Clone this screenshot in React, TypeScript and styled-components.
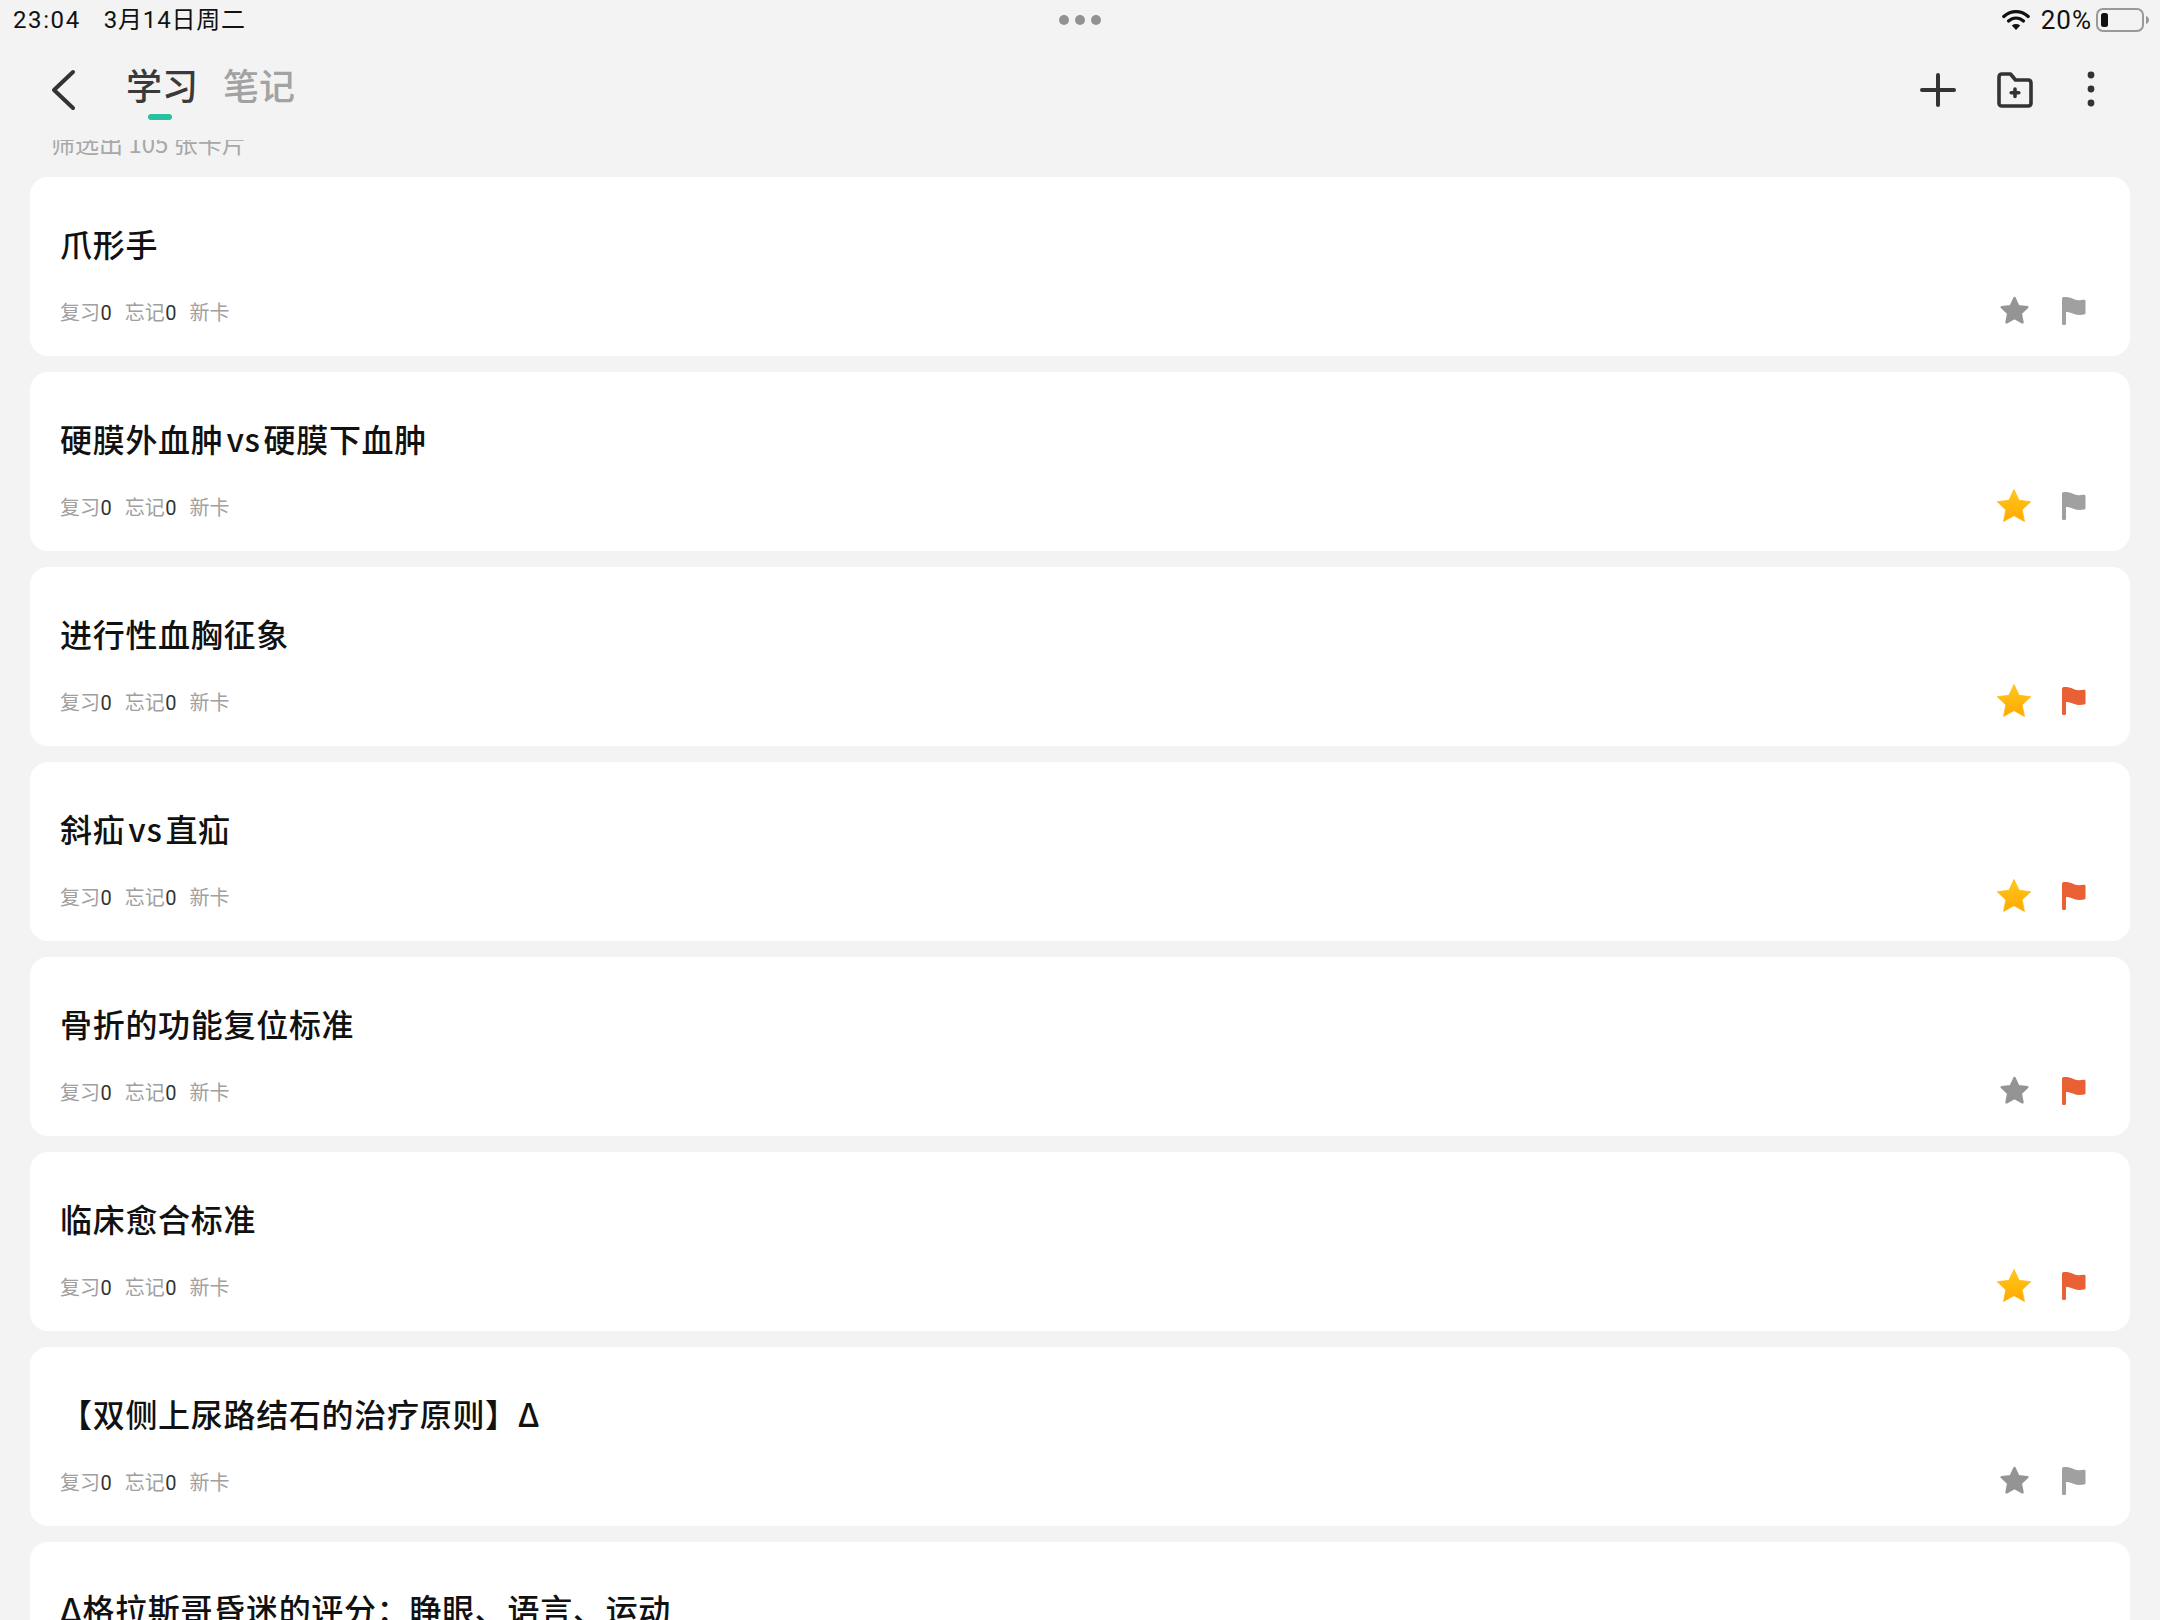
import React from "react";
import styled, { createGlobalStyle } from "styled-components";

const FONT = `"Noto Sans CJK SC", "Noto Sans", sans-serif`;

const Global = createGlobalStyle`
  html, body { margin: 0; padding: 0; background: #f3f3f3; }
  * { box-sizing: border-box; }
`;

const Screen = styled.div`
  width: 2160px;
  height: 1620px;
  overflow: hidden;
  background: #f3f3f3;
  font-family: ${FONT};
  display: flex;
  flex-direction: column;
`;

const StatusBar = styled.div`
  height: 40px;
  flex: none;
  display: grid;
  grid-template-columns: 1fr auto 1fr;
  align-items: center;
  padding: 0 10px;
  color: #111;
  font-family: Roboto, ${FONT};
  font-size: 24px;
  line-height: 28px;
`;

const StatusLeft = styled.div`
  display: flex;
  align-items: baseline;
  gap: 23px;
  padding-left: 3px;
`;

const Clock = styled.span`
  letter-spacing: 1.6px;
`;

const DateText = styled.span`
  letter-spacing: 0.8px;
`;

const StatusRight = styled.div`
  display: flex;
  align-items: center;
  justify-content: flex-end;
  font-size: 26px;
  letter-spacing: 1px;
`;

const Wifi = styled.svg`
  margin-right: 11px;
`;

const Percent = styled.span`
  margin-right: 4px;
`;

const Dots = styled.div`
  display: flex;
  gap: 6px;
`;

const Dot = styled.span`
  width: 10px;
  height: 10px;
  border-radius: 50%;
  background: #929292;
`;

const NavBar = styled.div`
  height: 100px;
  flex: none;
  display: flex;
  align-items: center;
  padding: 0 51px 0 50px;
`;

const BackIcon = styled.svg`
  width: 28px;
  height: 44px;
  margin-right: 48px;
`;

const Tabs = styled.div`
  display: flex;
  gap: 25px;
  flex: 1;
  margin-bottom: 12px;
`;

const Tab = styled.div<{ $active?: boolean }>`
  position: relative;
  font-size: 36px;
  line-height: 50px;
  font-weight: 500;
  color: ${(p) => (p.$active ? "#3a3a3a" : "#a2a2a2")};
  ${(p) =>
    p.$active &&
    `&::after {
      content: "";
      position: absolute;
      left: 22px;
      bottom: -11px;
      width: 24px;
      height: 6px;
      border-radius: 3px;
      background: #26c2a0;
    }`}
`;

const Actions = styled.div`
  display: flex;
  align-items: center;
  gap: 40.5px;
`;

const ActionIcon = styled.svg`
  width: 36px;
  height: 40px;
  color: #333;
  display: block;
`;

const Clipped = styled.div`
  height: 37px;
  flex: none;
  overflow: hidden;
  padding-left: 51px;
`;

const ClippedText = styled.div`
  margin-top: -14px;
  font-size: 24px;
  line-height: 34px;
  color: #a8a8a8;
  white-space: nowrap;
`;

const List = styled.div`
  display: flex;
  flex-direction: column;
  gap: 16px;
  padding: 0 30px;
`;

const Card = styled.div`
  flex: none;
  height: 179px;
  background: #fff;
  border-radius: 18px;
  padding: 44px 26px 0 30px;
`;

const Title = styled.div`
  font-size: 32px;
  line-height: 44px;
  font-weight: 500;
  letter-spacing: 0.7px;
  word-spacing: -5px;
  color: #111;
  white-space: nowrap;
`;

const MetaRow = styled.div`
  display: flex;
  align-items: center;
  justify-content: space-between;
  margin-top: 24px;
  height: 44px;
`;

const Meta = styled.div`
  display: flex;
  gap: 13px;
  font-size: 20px;
  color: #a0a0a0;
`;

const Count = styled.span`
  font-family: Roboto, sans-serif;
  font-size: 20px;
  margin-left: 0.5px;
  color: #333;
`;

const Marks = styled.div`
  display: flex;
  align-items: center;
`;

const MarkSlot = styled.div`
  width: 60px;
  height: 40px;
  display: flex;
  align-items: center;
  justify-content: center;
`;

const StarIcon = styled.svg<{ $on: boolean }>`
  margin-top: ${(p) => (p.$on ? "0" : "-2px")};
`;

const STAR =
  "M12 1.6l3.2 6.8 7.4.9-5.4 5.1 1.4 7.4-6.6-3.7-6.6 3.7 1.4-7.4L1.4 9.3l7.4-.9z";

const Star = ({ on }: { on: boolean }) => {
  const s = on ? 38 : 29;
  return (
    <StarIcon $on={on} width={s} height={s} viewBox="0 0 24 24">
      <defs>
        <linearGradient id="gold" x1="0" y1="0" x2="0" y2="1">
          <stop offset="0" stopColor="#ffc81e" />
          <stop offset="1" stopColor="#ffa800" />
        </linearGradient>
      </defs>
      <path
        d={STAR}
        fill={on ? "url(#gold)" : "#949494"}
        stroke={on ? "#ffb90f" : "#949494"}
        strokeWidth={on ? 0.5 : 2}
        strokeLinejoin="round"
      />
    </StarIcon>
  );
};

const Flag = ({ on }: { on: boolean }) => (
  <svg width="26" height="30" viewBox="0 0 26 30">
    <path
      d="M1 3C1 1.500 2 1 3.500 1c3.500 0 6 .5 9 2 3 1.300 6 1.500 10 .8 1-.2 2 .3 2 1.400V17c0 .8-.5 1.300-1.300 1.500-4 .8-7.500.6-10.700-.8C9.500 16.500 7.500 16 5 16v11.500c0 1-.7 1.500-2 1.500s-2-.5-2-1.500z"
      fill={on ? "#e96034" : "#a0a0a0"}
    />
  </svg>
);

const cards = [
  { title: "爪形手", star: false, flag: false },
  { title: "硬膜外血肿 vs 硬膜下血肿", star: true, flag: false },
  { title: "进行性血胸征象", star: true, flag: true },
  { title: "斜疝 vs 直疝", star: true, flag: true },
  { title: "骨折的功能复位标准", star: false, flag: true },
  { title: "临床愈合标准", star: true, flag: true },
  { title: "【双侧上尿路结石的治疗原则】Δ", star: false, flag: false },
  { title: "Δ格拉斯哥昏迷的评分：睁眼、语言、运动", star: false, flag: false },
];

export default function App() {
  return (
    <Screen>
      <Global />
      <StatusBar>
        <StatusLeft>
          <Clock>23:04</Clock>
          <DateText>3月14日周二</DateText>
        </StatusLeft>
        <Dots>
          <Dot />
          <Dot />
          <Dot />
        </Dots>
        <StatusRight>
          <Wifi width="28" height="22" viewBox="0 0 28 22" fill="none" stroke="#111" strokeLinecap="round">
            <path d="M1.800 7.500C9 1 19 1 26.200 7.500" strokeWidth="3.200" />
            <path d="M6.500 12C11 8 17 8 21.500 12" strokeWidth="3.200" />
            <path d="M14 21l-4.200-4.600c2.500-1.800 5.900-1.800 8.400 0z" fill="#111" stroke="none" />
          </Wifi>
          <Percent>20%</Percent>
          <svg width="54" height="26" viewBox="0 0 54 26" fill="none">
            <rect x="1" y="2" width="46" height="22" rx="6" stroke="#999" strokeWidth="2" />
            <rect x="5" y="6" width="7" height="14" rx="2.500" fill="#111" />
            <path d="M50 9c1.800.5 3 2 3 4s-1.200 3.500-3 4z" fill="#999" />
          </svg>
        </StatusRight>
      </StatusBar>
      <NavBar>
        <BackIcon viewBox="0 0 28 44" fill="none" stroke="#333" strokeWidth="4" strokeLinecap="round" strokeLinejoin="round">
          <path d="M23 4L4 22l19 18" />
        </BackIcon>
        <Tabs>
          <Tab $active>学习</Tab>
          <Tab>笔记</Tab>
        </Tabs>
        <Actions>
          <ActionIcon viewBox="0 0 36 40" fill="none" stroke="currentColor" strokeWidth="4" strokeLinecap="round">
            <path d="M18 5v30M2 20h32" />
          </ActionIcon>
          <ActionIcon viewBox="0 0 36 40" fill="none" stroke="currentColor" strokeWidth="3.600" strokeLinejoin="round" strokeLinecap="round">
            <path d="M2 7c0-2 1-3 3-3h8.500l5 6H31c2 0 3 1 3 3v20c0 2-1 3-3 3H5c-2 0-3-1-3-3z" />
            <path d="M18 19v7.500M14.200 22.700h7.600" />
          </ActionIcon>
          <ActionIcon viewBox="0 0 36 40" fill="currentColor" stroke="none">
            <circle cx="18" cy="5" r="3.400" />
            <circle cx="18" cy="19" r="3.400" />
            <circle cx="18" cy="33" r="3.400" />
          </ActionIcon>
        </Actions>
      </NavBar>
      <Clipped>
        <ClippedText>筛选出 105 张卡片</ClippedText>
      </Clipped>
      <List>
        {cards.map((c) => (
          <Card key={c.title}>
            <Title>{c.title}</Title>
            <MetaRow>
              <Meta>
                <span>
                  复习<Count>0</Count>
                </span>
                <span>
                  忘记<Count>0</Count>
                </span>
                <span>新卡</span>
              </Meta>
              <Marks>
                <MarkSlot>
                  <Star on={c.star} />
                </MarkSlot>
                <MarkSlot>
                  <Flag on={c.flag} />
                </MarkSlot>
              </Marks>
            </MetaRow>
          </Card>
        ))}
      </List>
    </Screen>
  );
}
